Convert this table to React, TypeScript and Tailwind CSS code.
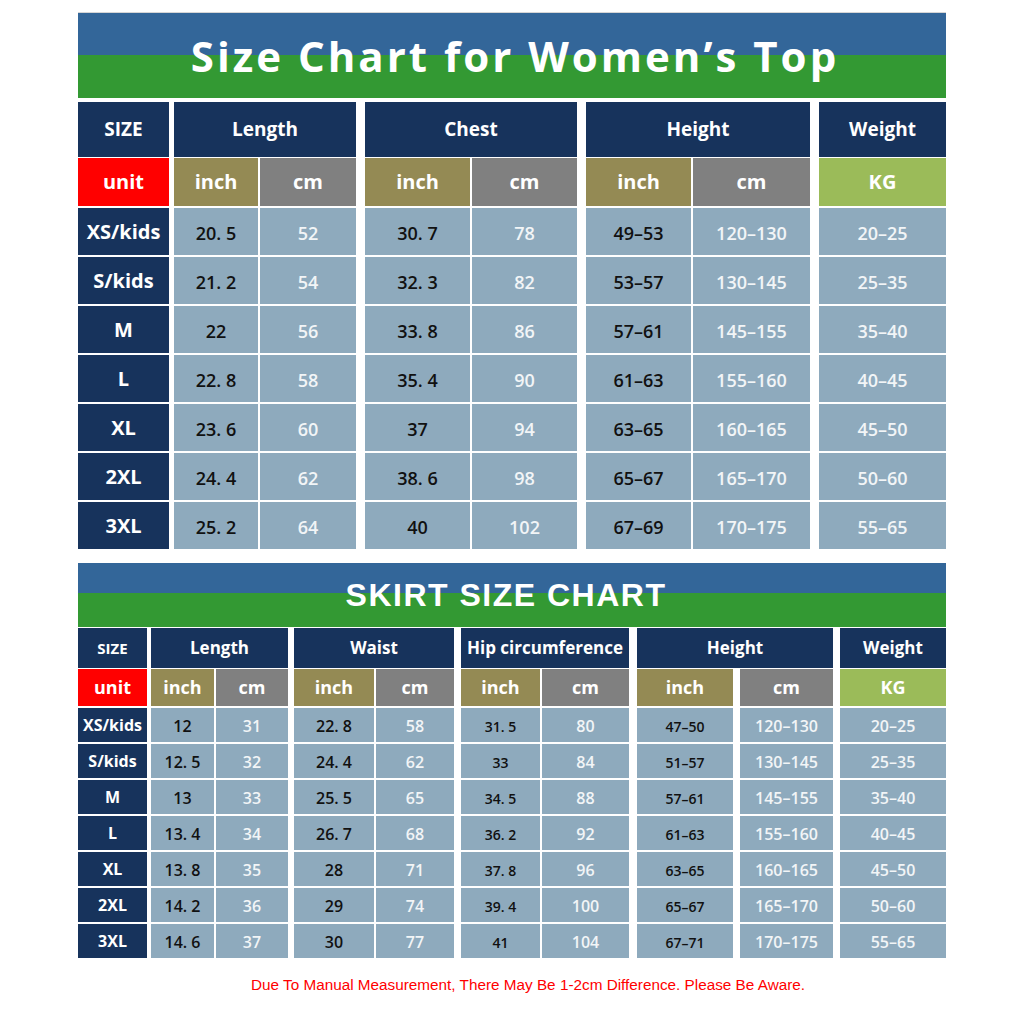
import React from "react";

type Col = { w: string; ml: string; tone: "dark" | "light"; size?: string };

const topCols: Col[] = [
  { w: "w-[84px]", ml: "ml-[5px]", tone: "dark" },
  { w: "w-[96px]", ml: "ml-[2px]", tone: "light" },
  { w: "w-[105px]", ml: "ml-[9px]", tone: "dark" },
  { w: "w-[105px]", ml: "ml-[2px]", tone: "light" },
  { w: "w-[105px]", ml: "ml-[9px]", tone: "dark" },
  { w: "w-[117px]", ml: "ml-[2px]", tone: "light" },
  { w: "w-[127px]", ml: "ml-[9px]", tone: "light" },
];

const skirtCols: Col[] = [
  { w: "w-[63px]", ml: "ml-[4px]", tone: "dark" },
  { w: "w-[72px]", ml: "ml-[2px]", tone: "light" },
  { w: "w-[80px]", ml: "ml-[6px]", tone: "dark" },
  { w: "w-[78px]", ml: "ml-[2px]", tone: "light" },
  { w: "w-[79px]", ml: "ml-[7px]", tone: "dark", size: "text-[14px]" },
  { w: "w-[87px]", ml: "ml-[2px]", tone: "light" },
  { w: "w-[96px]", ml: "ml-[8px]", tone: "dark", size: "text-[14px]" },
  { w: "w-[93px]", ml: "ml-[7px]", tone: "light" },
  { w: "w-[106px]", ml: "ml-[7px]", tone: "light" },
];

const topRows: [string, string[]][] = [
  ["XS/kids", ["20. 5", "52", "30. 7", "78", "49–53", "120–130", "20–25"]],
  ["S/kids", ["21. 2", "54", "32. 3", "82", "53–57", "130–145", "25–35"]],
  ["M", ["22", "56", "33. 8", "86", "57–61", "145–155", "35–40"]],
  ["L", ["22. 8", "58", "35. 4", "90", "61–63", "155–160", "40–45"]],
  ["XL", ["23. 6", "60", "37", "94", "63–65", "160–165", "45–50"]],
  ["2XL", ["24. 4", "62", "38. 6", "98", "65–67", "165–170", "50–60"]],
  ["3XL", ["25. 2", "64", "40", "102", "67–69", "170–175", "55–65"]],
];

const skirtRows: [string, string[]][] = [
  ["XS/kids", ["12", "31", "22. 8", "58", "31. 5", "80", "47–50", "120–130", "20–25"]],
  ["S/kids", ["12. 5", "32", "24. 4", "62", "33", "84", "51–57", "130–145", "25–35"]],
  ["M", ["13", "33", "25. 5", "65", "34. 5", "88", "57–61", "145–155", "35–40"]],
  ["L", ["13. 4", "34", "26. 7", "68", "36. 2", "92", "61–63", "155–160", "40–45"]],
  ["XL", ["13. 8", "35", "28", "71", "37. 8", "96", "63–65", "160–165", "45–50"]],
  ["2XL", ["14. 2", "36", "29", "74", "39. 4", "100", "65–67", "165–170", "50–60"]],
  ["3XL", ["14. 6", "37", "30", "77", "41", "104", "67–71", "170–175", "55–65"]],
];

const navy = "bg-[#17335c] text-white font-bold";
const cellBase = "flex items-center justify-center";

const App: React.FC = () => {
  return (
    <div
      className="w-[1024px] h-[1024px] bg-white pt-[12px]"
      style={{ fontFamily: '"Open Sans", "Noto Sans", sans-serif' }}
    >
      <div className="ml-[78px] w-[868px]">
        <div className="h-px bg-[#d6d6d6]" />

        {/* Top banner */}
        <div className="h-[85px] flex items-center justify-center bg-[linear-gradient(to_bottom,#336699_0,#336699_42px,#339933_42px,#339933_100%)]">
          <h1 className="text-[42px] font-bold text-white tracking-[3px] leading-none pl-[6px]">
            Size Chart for Women’s Top
          </h1>
        </div>

        {/* Top table */}
        <div className="mt-[4px] flex flex-col">
          <div className="flex h-[55px]">
            <div className={`${cellBase} ${navy} w-[91px] text-[19px]`}>SIZE</div>
            <div className={`${cellBase} ${navy} w-[182px] ml-[5px] text-[19px]`}>Length</div>
            <div className={`${cellBase} ${navy} w-[212px] ml-[9px] text-[19px]`}>Chest</div>
            <div className={`${cellBase} ${navy} w-[224px] ml-[9px] text-[19px]`}>Height</div>
            <div className={`${cellBase} ${navy} w-[127px] ml-[9px] text-[19px]`}>Weight</div>
          </div>
          <div className="flex h-[48px] mt-[1px] text-[20px] font-bold text-white">
            <div className={`${cellBase} w-[91px] bg-[#ff0000]`}>unit</div>
            <div className={`${cellBase} w-[84px] ml-[5px] bg-[#948a54]`}>inch</div>
            <div className={`${cellBase} w-[96px] ml-[2px] bg-[#808080]`}>cm</div>
            <div className={`${cellBase} w-[105px] ml-[9px] bg-[#948a54]`}>inch</div>
            <div className={`${cellBase} w-[105px] ml-[2px] bg-[#808080]`}>cm</div>
            <div className={`${cellBase} w-[105px] ml-[9px] bg-[#948a54]`}>inch</div>
            <div className={`${cellBase} w-[117px] ml-[2px] bg-[#808080]`}>cm</div>
            <div className={`${cellBase} w-[127px] ml-[9px] bg-[#9bbb59]`}>KG</div>
          </div>
          {topRows.map(([size, vals]) => (
            <div key={size} className="flex h-[47px] mt-[2px]">
              <div className={`${cellBase} ${navy} w-[91px] text-[20px]`}>{size}</div>
              {vals.map((v, i) => (
                <div
                  key={i}
                  className={`${cellBase} ${topCols[i].w} ${topCols[i].ml} bg-[#8eaabd] text-[18px] font-semibold pt-[3px] ${
                    topCols[i].tone === "dark" ? "text-[#111111]" : "text-[#f2f5f7]"
                  }`}
                >
                  {v}
                </div>
              ))}
            </div>
          ))}
        </div>

        {/* Skirt banner */}
        <div className="mt-[14px] h-[64px] flex items-center justify-center bg-[linear-gradient(to_bottom,#336699_0,#336699_30px,#339933_30px,#339933_100%)]">
          <h2
            className="text-[32px] font-bold text-white tracking-[1.5px] leading-none pr-[12px]"
            style={{ fontFamily: '"Liberation Sans", Arial, sans-serif' }}
          >
            SKIRT SIZE CHART
          </h2>
        </div>

        {/* Skirt table */}
        <div className="mt-[1px] flex flex-col">
          <div className="flex h-[40px] text-[17px]">
            <div className={`${cellBase} ${navy} w-[69px] text-[15px]`}>SIZE</div>
            <div className={`${cellBase} ${navy} w-[137px] ml-[4px]`}>Length</div>
            <div className={`${cellBase} ${navy} w-[160px] ml-[6px]`}>Waist</div>
            <div className={`${cellBase} ${navy} w-[168px] ml-[7px]`}>Hip circumference</div>
            <div className={`${cellBase} ${navy} w-[196px] ml-[8px]`}>Height</div>
            <div className={`${cellBase} ${navy} w-[106px] ml-[7px]`}>Weight</div>
          </div>
          <div className="flex h-[37px] mt-[1px] text-[18px] font-bold text-white">
            <div className={`${cellBase} w-[69px] bg-[#ff0000]`}>unit</div>
            <div className={`${cellBase} w-[63px] ml-[4px] bg-[#948a54]`}>inch</div>
            <div className={`${cellBase} w-[72px] ml-[2px] bg-[#808080]`}>cm</div>
            <div className={`${cellBase} w-[80px] ml-[6px] bg-[#948a54]`}>inch</div>
            <div className={`${cellBase} w-[78px] ml-[2px] bg-[#808080]`}>cm</div>
            <div className={`${cellBase} w-[79px] ml-[7px] bg-[#948a54]`}>inch</div>
            <div className={`${cellBase} w-[87px] ml-[2px] bg-[#808080]`}>cm</div>
            <div className={`${cellBase} w-[96px] ml-[8px] bg-[#948a54]`}>inch</div>
            <div className={`${cellBase} w-[93px] ml-[7px] bg-[#808080]`}>cm</div>
            <div className={`${cellBase} w-[106px] ml-[7px] bg-[#9bbb59]`}>KG</div>
          </div>
          {skirtRows.map(([size, vals]) => (
            <div key={size} className="flex h-[34px] mt-[2px]">
              <div className={`${cellBase} ${navy} w-[69px] text-[16px]`}>{size}</div>
              {vals.map((v, i) => (
                <div
                  key={i}
                  className={`${cellBase} ${skirtCols[i].w} ${skirtCols[i].ml} bg-[#8eaabd] font-semibold pt-[2px] ${
                    skirtCols[i].size ?? "text-[16px]"
                  } ${skirtCols[i].tone === "dark" ? "text-[#111111]" : "text-[#f2f5f7]"}`}
                >
                  {v}
                </div>
              ))}
            </div>
          ))}
        </div>

        <p
          className="mt-[16px] pl-[32px] text-center text-[15.3px] text-[#ff0000]"
          style={{ fontFamily: '"Liberation Sans", Arial, sans-serif' }}
        >
          Due To Manual Measurement, There May Be 1-2cm Difference. Please Be Aware.
        </p>
      </div>
    </div>
  );
};

export default App;
